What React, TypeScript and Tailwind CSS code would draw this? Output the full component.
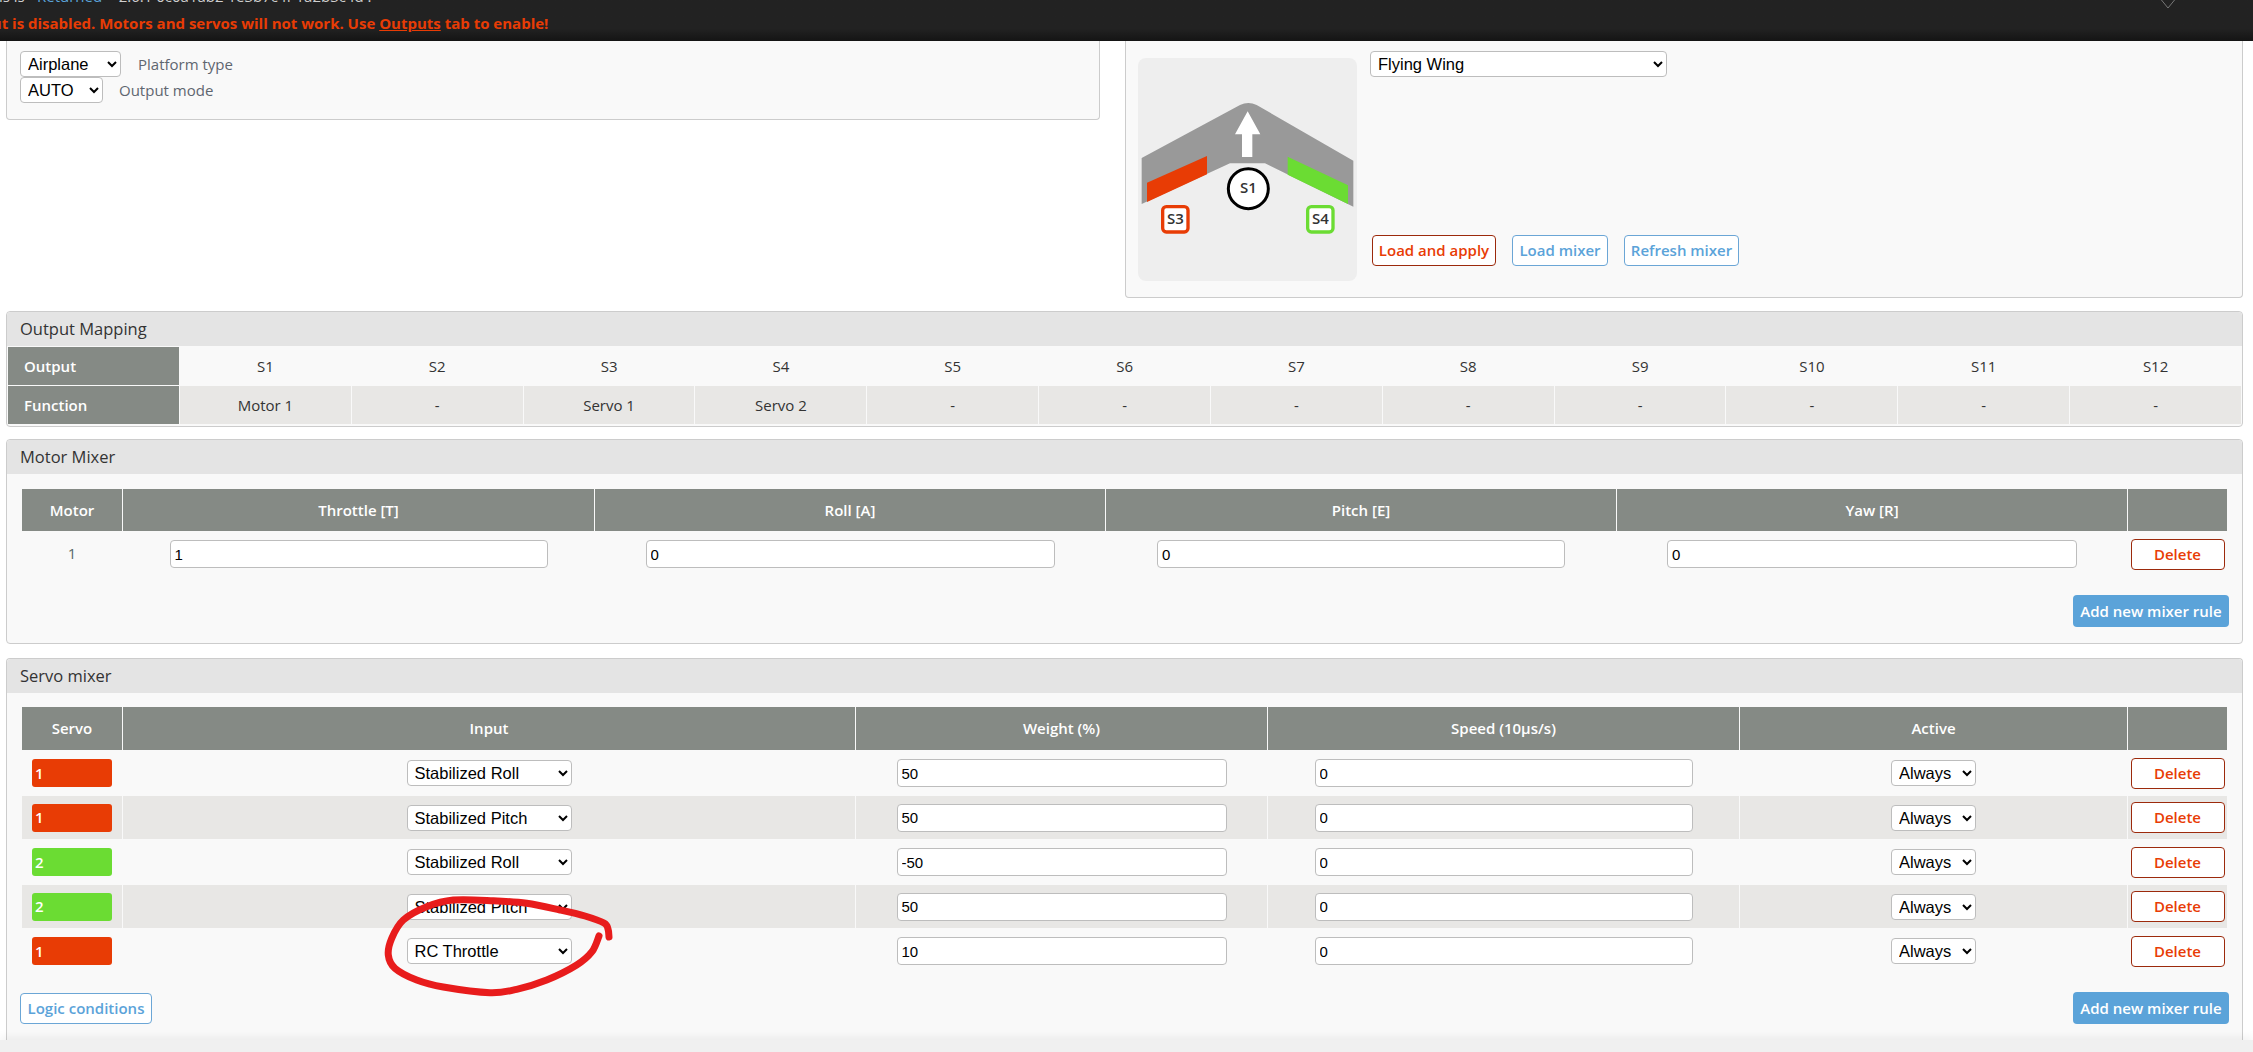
const ui = { fontFamily: '"Open Sans", sans-serif' };

const outputs = ['S1', 'S2', 'S3', 'S4', 'S5', 'S6', 'S7', 'S8', 'S9', 'S10', 'S11', 'S12'];
const functions = ['Motor 1', '-', 'Servo 1', 'Servo 2', '-', '-', '-', '-', '-', '-', '-', '-'];

const motorCols = 'grid grid-cols-[100px_471px_510px_510px_510px_99px] gap-x-px';
const servoCols = 'grid grid-cols-[100px_732px_411px_471px_387px_99px] gap-x-px';

const servoRows = [
  { servo: '1', color: 'bg-[#e83c05]', input: 'Stabilized Roll', weight: '50', h: 'h-[46px]', bg: '' },
  { servo: '1', color: 'bg-[#e83c05]', input: 'Stabilized Pitch', weight: '50', h: 'h-[43px]', bg: 'bg-[#e8e7e5]' },
  { servo: '2', color: 'bg-[#6bdc33]', input: 'Stabilized Roll', weight: '-50', h: 'h-[46px]', bg: '' },
  { servo: '2', color: 'bg-[#6bdc33]', input: 'Stabilized Pitch', weight: '50', h: 'h-[43px]', bg: 'bg-[#e8e7e5]' },
  { servo: '1', color: 'bg-[#e83c05]', input: 'RC Throttle', weight: '10', h: 'h-[46px]', bg: '' },
];

// marker ring traced from the picture, smoothed with catmull-rom
const ringPoints = [
  [609, 937], [608, 929], [604, 923], [585, 916], [560, 910], [526.7, 903.3], [493.3, 900.7], [453.3, 900],
  [426.7, 906.7], [403.3, 920], [391.7, 938.3], [388.3, 955], [395, 968.3], [416.7, 980], [443.3, 987],
  [490, 992.7], [516.7, 989.3], [546.7, 980], [576.7, 965], [592, 951.7], [599, 936],
];

function ringPath() {
  let d = `M${ringPoints[0][0]} ${ringPoints[0][1]}`;
  for (let i = 0; i < ringPoints.length - 1; i++) {
    const p0 = ringPoints[Math.max(i - 1, 0)];
    const p1 = ringPoints[i];
    const p2 = ringPoints[i + 1];
    const p3 = ringPoints[Math.min(i + 2, ringPoints.length - 1)];
    const c1x = p1[0] + (p2[0] - p0[0]) / 6;
    const c1y = p1[1] + (p2[1] - p0[1]) / 6;
    const c2x = p2[0] - (p3[0] - p1[0]) / 6;
    const c2y = p2[1] - (p3[1] - p1[1]) / 6;
    d += ` C${c1x} ${c1y} ${c2x} ${c2y} ${p2[0]} ${p2[1]}`;
  }
  return d;
}

function Select({ value, className }: { value: string; className: string }) {
  return (
    <select
      defaultValue={value}
      className={`h-[26px] rounded-[4px] border border-[#bdbdbd] bg-white pl-[3px] text-[16.5px] text-black ${className}`}
      style={{ fontFamily: '"Liberation Sans", sans-serif' }}
    >
      <option>{value}</option>
    </select>
  );
}

function NumInput({ value, className }: { value: string; className: string }) {
  return (
    <input
      defaultValue={value}
      className={`h-[28px] rounded-[4px] border border-[#bdbdbd] bg-white pl-[4px] text-[15px] text-black ${className}`}
      style={{ fontFamily: '"Liberation Sans", sans-serif' }}
    />
  );
}

function OutlineBtn({ label, red, className }: { label: string; red?: boolean; className: string }) {
  return (
    <button
      className={`flex h-[31px] items-center justify-center rounded-[4px] border bg-white text-[15px] font-semibold ${
        red ? 'border-[#9c2a0c] text-[#e83c05]' : 'border-[#6ba6d6] text-[#5ba3d9]'
      } ${className}`}
    >
      {label}
    </button>
  );
}

function AddRule() {
  return (
    <button className="flex h-[32px] w-[156px] items-center justify-center rounded-[4px] bg-[#5ba3d9] text-[15px] font-semibold text-white">
      Add new mixer rule
    </button>
  );
}

function PanelTitle({ children }: { children: string }) {
  return (
    <div className="flex h-[34px] items-center rounded-t-[4px] bg-[#e4e4e4] pl-[13px] text-[16.5px] text-[#333]">
      {children}
    </div>
  );
}

function Wing() {
  return (
    <svg viewBox="54 54 657 669" className="h-[223px] w-[219px] rounded-[8px] bg-[#eeeeee]">
      <path d="M65 354 L360 195 Q385 183 410 195 L700 362 L700 500 L435 370 L330 370 L65 492 Z" fill="#999999" />
      <polygon points="81,428 261,348 261,403 81,486" fill="#e83c05" />
      <polygon points="503,350 684,436 684,492 503,404" fill="#6bdc33" />
      <polygon points="383,214 421,283 397,283 397,351 366,351 366,283 345,283" fill="#ffffff" />
      <circle cx="385" cy="446" r="60" fill="#ffffff" stroke="#000000" strokeWidth="9" />
      <rect x="128" y="500" width="76" height="76" rx="11" fill="#ffffff" stroke="#e83c05" strokeWidth="10" />
      <rect x="563" y="500" width="76" height="76" rx="11" fill="#ffffff" stroke="#6bdc33" strokeWidth="10" />
      <g fontFamily='"Open Sans", sans-serif' fontWeight="600" fontSize="45" fill="#333333" textAnchor="middle">
        <text x="385" y="459">S1</text>
        <text x="166" y="553">S3</text>
        <text x="601" y="553">S4</text>
      </g>
    </svg>
  );
}

export default function App() {
  return (
    <div className="relative h-[1052px] w-[2253px] overflow-hidden bg-white" style={ui}>
      {/* Top status bar */}
      <div className="relative h-[41px] overflow-hidden bg-gradient-to-b from-[#222222] from-70% to-[#141414]">
        <div className="-mt-[9px] flex h-[11px] items-center whitespace-nowrap text-[15px] text-[#cfcfcf]">
          <span className="-ml-[1px] w-[38px]">is is</span>
          <span className="w-[73px] text-[#5ba3d9]">Returned</span>
          <span>- 2.6.1 0c0a1ab2 1e3b7c4f 1a2b3c4d !</span>
        </div>
        <div className="mt-[10px] -ml-[46px] whitespace-nowrap text-[15px] font-bold text-[#e83c05]">
          Output is disabled. Motors and servos will not work. Use <span className="underline">Outputs</span> tab to enable!
        </div>
        <svg viewBox="0 0 24 10" className="absolute top-0 left-[2156px] h-[10px] w-[24px]">
          <polyline points="3,-3 12,8 21,-3" fill="none" stroke="#777777" strokeWidth="1" />
        </svg>
      </div>

      {/* Platform + mixer preset */}
      <div className="flex h-[270px] items-start pl-[6px]">
        <div className="flex h-[79px] w-[1094px] flex-col rounded-b-[4px] border-x border-b border-[#cccccc] bg-[#f9f9f9] pt-[10px] pl-[13px]">
          <div className="flex h-[26px] items-center">
            <Select value="Airplane" className="w-[101px]" />
            <span className="ml-[17px] text-[15px] text-[#5f6670]">Platform type</span>
          </div>
          <div className="flex h-[26px] items-center">
            <Select value="AUTO" className="w-[83px]" />
            <span className="ml-[16px] text-[15px] text-[#5f6670]">Output mode</span>
          </div>
        </div>
        <div className="ml-[25px] flex h-[257px] w-[1118px] rounded-b-[4px] border-x border-b border-[#cccccc] bg-[#f9f9f9] pl-[12px]">
          <div className="pt-[17px]">
            <Wing />
          </div>
          <div className="ml-[13px] flex flex-col pt-[10px]">
            <Select value="Flying Wing" className="w-[297px]" />
            <div className="mt-[158px] ml-[2px] flex gap-[16px]">
              <OutlineBtn label="Load and apply" red className="w-[124px]" />
              <OutlineBtn label="Load mixer" className="w-[96px]" />
              <OutlineBtn label="Refresh mixer" className="w-[115px]" />
            </div>
          </div>
        </div>
      </div>

      <div className="flex flex-col pr-[10px] pl-[6px]">
        {/* Output Mapping */}
        <div className="h-[116px] rounded-[4px] border border-[#cccccc] bg-[#f9f9f9]">
          <PanelTitle>Output Mapping</PanelTitle>
          <div className="mt-px ml-px grid w-[2233px] grid-cols-[171px_repeat(12,minmax(0,1fr))] gap-x-px gap-y-px text-[15px] text-[#333]">
            <div className="flex h-[38px] items-center bg-[#858a85] pl-[16px] font-semibold text-white">Output</div>
            {outputs.map((o) => (
              <div key={o} className="flex h-[38px] items-center justify-center">
                {o}
              </div>
            ))}
            <div className="flex h-[38px] items-center bg-[#858a85] pl-[16px] font-semibold text-white">Function</div>
            {functions.map((f, i) => (
              <div key={i} className="flex h-[38px] items-center justify-center bg-[#e8e7e5]">
                {f}
              </div>
            ))}
          </div>
        </div>

        {/* Motor Mixer */}
        <div className="mt-[12px] h-[205px] rounded-[4px] border border-[#cccccc] bg-[#f9f9f9]">
          <PanelTitle>Motor Mixer</PanelTitle>
          <div className="mt-[15px] ml-[15px] w-max">
            <div className={`${motorCols} h-[42px] text-[15px] font-semibold text-white`}>
              {['Motor', 'Throttle [T]', 'Roll [A]', 'Pitch [E]', 'Yaw [R]', ''].map((h, i) => (
                <div key={i} className="flex items-center justify-center bg-[#858a85]">
                  {h}
                </div>
              ))}
            </div>
            <div className={`${motorCols} h-[46px] items-center`}>
              <div className="-mt-[2px] text-center text-[15px] text-[#5a6a6a]">1</div>
              <div className="flex justify-center">
                <NumInput value="1" className="w-[378px]" />
              </div>
              <div className="flex justify-center">
                <NumInput value="0" className="w-[409px]" />
              </div>
              <div className="flex justify-center">
                <NumInput value="0" className="w-[408px]" />
              </div>
              <div className="flex justify-center">
                <NumInput value="0" className="w-[410px]" />
              </div>
              <div className="flex justify-center">
                <OutlineBtn label="Delete" red className="w-[94px]" />
              </div>
            </div>
          </div>
          <div className="mt-[18px] flex justify-end pr-[13px]">
            <AddRule />
          </div>
        </div>

        {/* Servo mixer */}
        <div className="mt-[14px] h-[400px] rounded-t-[4px] border-x border-t border-[#cccccc] bg-[#f9f9f9]">
          <PanelTitle>Servo mixer</PanelTitle>
          <div className="mt-[14px] ml-[15px] w-max">
            <div className={`${servoCols} h-[43px] text-[15px] font-semibold text-white`}>
              {['Servo', 'Input', 'Weight (%)', 'Speed (10µs/s)', 'Active', ''].map((h, i) => (
                <div key={i} className="flex items-center justify-center bg-[#858a85]">
                  {h}
                </div>
              ))}
            </div>
            {servoRows.map((r, i) => (
              <div key={i} className={`${servoCols} ${r.h}`}>
                <div className={`flex items-center justify-center ${r.bg}`}>
                  <div className={`flex h-[28px] w-[80px] items-center rounded-[3px] pl-[3px] text-[15px] font-semibold text-white ${r.color}`}>
                    {r.servo}
                  </div>
                </div>
                <div className={`flex items-center justify-center ${r.bg}`}>
                  <Select value={r.input} className="w-[165px]" />
                </div>
                <div className={`flex items-center justify-center ${r.bg}`}>
                  <NumInput value={r.weight} className="w-[330px]" />
                </div>
                <div className={`flex items-center justify-center ${r.bg}`}>
                  <NumInput value="0" className="w-[378px]" />
                </div>
                <div className={`flex items-center justify-center ${r.bg}`}>
                  <Select value="Always" className="w-[85px]" />
                </div>
                <div className={`flex items-center justify-center ${r.bg}`}>
                  <OutlineBtn label="Delete" red className="w-[94px]" />
                </div>
              </div>
            ))}
          </div>
          <div className="mt-[18px] flex items-center justify-between pr-[13px] pl-[13px]">
            <OutlineBtn label="Logic conditions" className="w-[132px]" />
            <AddRule />
          </div>
        </div>
      </div>

      {/* Bottom bar */}
      <div className="absolute right-0 bottom-0 left-0 h-[12px] bg-[#f0f0f0] shadow-[0_-4px_8px_rgba(0,0,0,0.05)]" />

      {/* Red marker ring drawn over the screenshot */}
      <svg viewBox="0 0 2253 1052" className="pointer-events-none absolute top-0 left-0 h-[1052px] w-[2253px]">
        <path d={ringPath()} fill="none" stroke="#e81c1c" strokeWidth="7" strokeLinecap="round" strokeLinejoin="round" />
      </svg>
    </div>
  );
}
